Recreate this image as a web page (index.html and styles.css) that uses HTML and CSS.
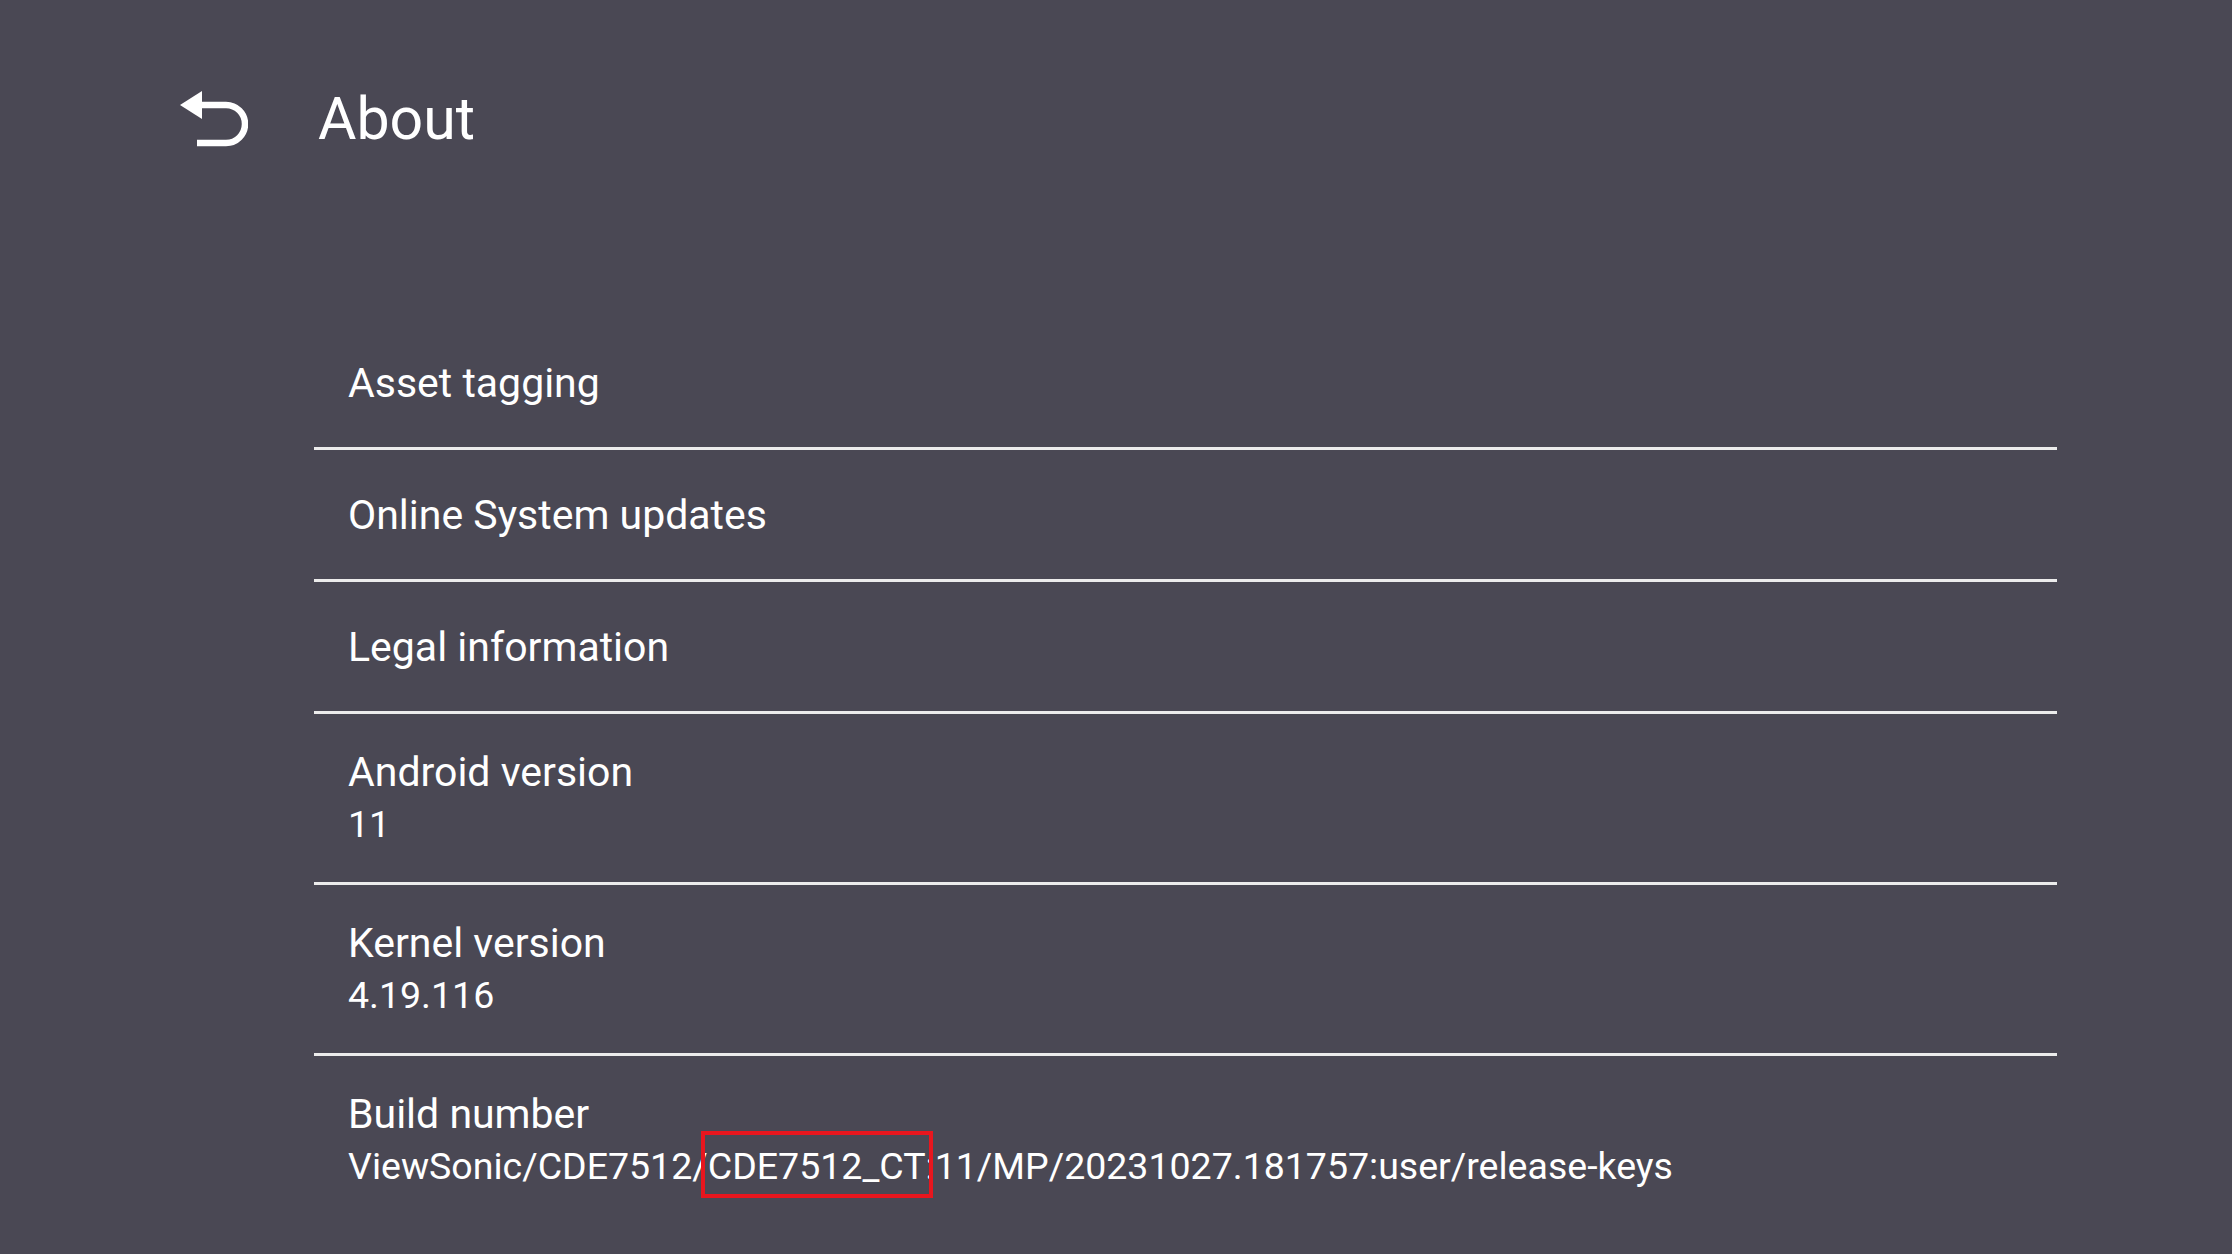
FILE: index.html
```html
<!DOCTYPE html>
<html lang="en">
<head>
  <meta charset="UTF-8" />
  <title>About</title>
  <meta name="viewport" content="width=device-width, initial-scale=1.0" />
  <link rel="stylesheet" href="styles.css">
</head>
<body>

<header class="top-bar">
  <a href="#" class="back">
    <svg width="70" height="60" viewBox="0 0 70 60">
      <polygon points="2,17 24,3 24,31" fill="#fff" />
      <path d="M20 17 H48 A19 19 0 0 1 48 55 H19" fill="none" stroke="#fff" stroke-width="6.5" />
    </svg>
  </a>
  <h1>About</h1>
</header>

<!-- Settings list -->
<ul class="prefs">
  <li class="pref"><span class="title">Asset tagging</span></li>
  <li class="pref"><span class="title">Online System updates</span></li>
  <li class="pref"><span class="title">Legal information</span></li>
  <li class="pref">
    <span class="title">Android version</span>
    <span class="summary">11</span>
  </li>
  <li class="pref">
    <span class="title">Kernel version</span>
    <span class="summary">4.19.116</span>
  </li>
  <li class="pref last">
    <span class="title">Build number</span>
    <span class="summary">ViewSonic/CDE7512/<span class="mark">CDE7512_CT</span>:11/MP/20231027.181757:user/release-keys</span>
  </li>
</ul>

</body>
</html>
```

FILE: styles.css
```css
* { box-sizing: border-box; }
body { margin: 0; background: #4a4854; color: #fff; font-family: Roboto, "Noto Sans", sans-serif; height: 1254px; overflow: hidden; }

.top-bar {
  display: flex;
  align-items: center;
  height: 236px;
  padding-left: 178px;
  gap: 70px;
}

.back { display: flex; }

.top-bar h1 {
  margin: 0;
  font-size: 59px;
  font-weight: 400;
}

.prefs {
  list-style: none;
  margin: 82px 0 0 314px;
  padding: 0;
  width: 1743px;
}

.pref {
  display: flex;
  flex-direction: column;
  justify-content: center;
  min-height: 132px;
  padding: 32px 0 32px 34px;
  border-bottom: 3px solid #ececec;
  line-height: 52px;
}

.pref .title { font-size: 41px; }
.pref .summary { font-size: 37.5px; }

.pref.last { border-bottom: none; }

.mark { position: relative; }

.mark::after {
  content: "";
  position: absolute;
  top: -13px;
  bottom: -10px;
  left: -7px;
  right: -7px;
  border: 4px solid #e8161e;
}
```
